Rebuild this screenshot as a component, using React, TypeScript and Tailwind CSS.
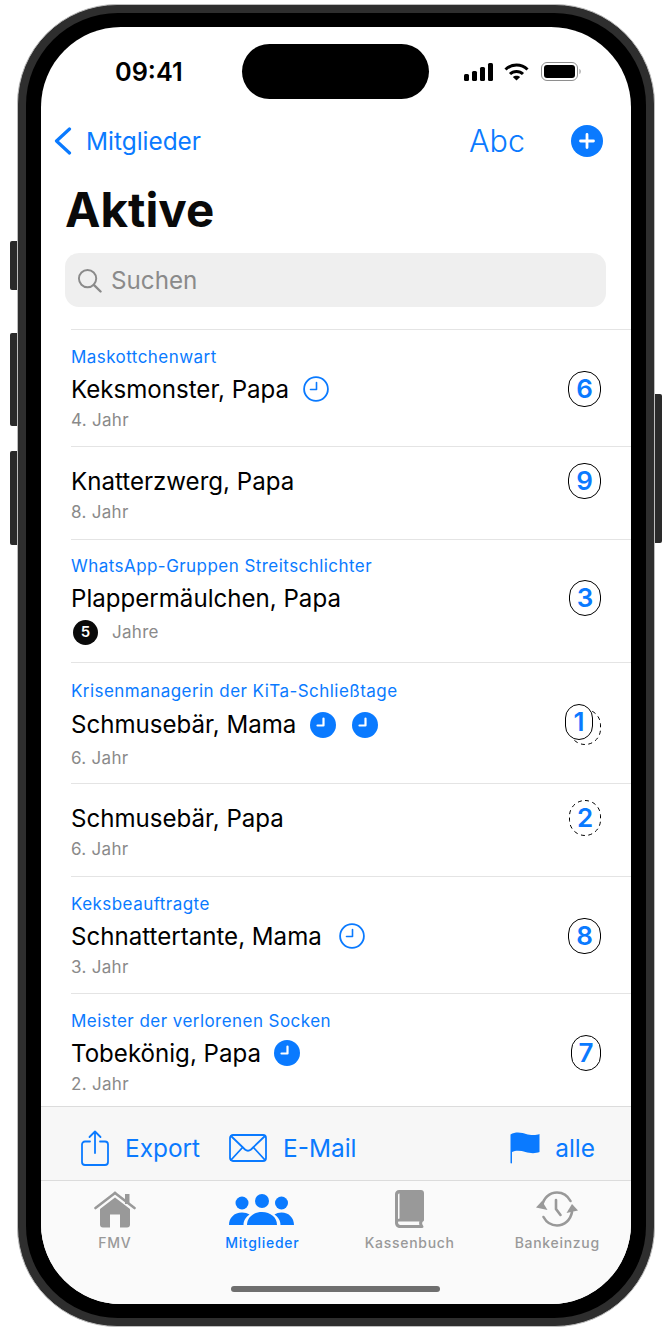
const BLUE = "#0a7aff";

function Clock({ filled }: { filled?: boolean }) {
  return (
    <svg width="26" height="26" viewBox="0 0 26 26" className="shrink-0">
      {filled ? (
        <>
          <circle cx="13" cy="13" r="13" fill={BLUE} />
          <path d="M13.500 6.500V13.500H7.500" fill="none" stroke="#fff" strokeWidth="2.200" strokeLinecap="round" strokeLinejoin="round" />
        </>
      ) : (
        <>
          <circle cx="13" cy="13" r="11.900" fill="none" stroke={BLUE} strokeWidth="1.800" />
          <path d="M13.500 6.500V13.500H7.500" fill="none" stroke={BLUE} strokeWidth="1.600" strokeLinecap="round" strokeLinejoin="round" />
        </>
      )}
    </svg>
  );
}

function DashedOutline({ w }: { w: number }) {
  return (
    <svg width={w} height="36" viewBox={`0 0 ${w} 36`} fill="none" className="absolute left-0 top-0">
      <rect x="0.500" y="0.500" width={w - 1} height="35" rx="15.500" stroke="#000" strokeWidth="1" strokeDasharray="4 3.500" />
    </svg>
  );
}

function Badge({ n, dashed, w }: { n: number; dashed?: boolean; w: string }) {
  return (
    <div
      className={
        "relative flex h-[36px] items-center justify-center rounded-[16px] text-[26px] font-semibold text-[#0a7aff] " +
        w +
        (dashed ? "" : " border border-black")
      }
    >
      {dashed && <DashedOutline w={32} />}
      {n}
    </div>
  );
}

type Member = {
  role?: string;
  name: string;
  sub: string;
  clocks?: ("line" | "fill")[];
  clockMl?: string;
  badge: number;
  badgeW: string;
  h: string;
  dashed?: boolean;
  overlap?: boolean;
  award?: boolean;
};

const members: Member[] = [
  { role: "Maskottchenwart", name: "Keksmonster, Papa", sub: "4. Jahr", clocks: ["line"], clockMl: "ml-[14px]", badge: 6, badgeW: "w-[33px]", h: "h-[117px]" },
  { name: "Knatterzwerg, Papa", sub: "8. Jahr", badge: 9, badgeW: "w-[33px]", h: "h-[93px]" },
  { role: "WhatsApp-Gruppen Streitschlichter", name: "Plappermäulchen, Papa", sub: "Jahre", badge: 3, badgeW: "w-[32px]", h: "h-[123px]", award: true },
  { role: "Krisenmanagerin der KiTa-Schließtage", name: "Schmusebär, Mama", sub: "6. Jahr", clocks: ["fill", "fill"], clockMl: "ml-[14px]", badge: 1, badgeW: "w-[28px]", h: "h-[121px]", overlap: true },
  { name: "Schmusebär, Papa", sub: "6. Jahr", badge: 2, badgeW: "w-[32px]", h: "h-[93px]", dashed: true },
  { role: "Keksbeauftragte", name: "Schnattertante, Mama", sub: "3. Jahr", clocks: ["line"], clockMl: "ml-[17px]", badge: 8, badgeW: "w-[33px]", h: "h-[117px]" },
  { role: "Meister der verlorenen Socken", name: "Tobekönig, Papa", sub: "2. Jahr", clocks: ["fill"], clockMl: "ml-[13px]", badge: 7, badgeW: "w-[30px]", h: "h-[117px]" },
];

function Row({ m }: { m: Member }) {
  return (
    <div className={"ml-[30px] flex shrink-0 flex-col justify-center border-t border-[#e4e4e4] pr-[30px] " + m.h + (m.overlap ? " pt-[2px]" : "")}>
      {m.role && <div className="mb-[2px] h-6 text-[17px] leading-6 tracking-[0.45px] text-[#0a7aff]">{m.role}</div>}
      <div className={"flex h-9 items-center justify-between " + (m.overlap ? "mb-[2px] mt-[2px]" : "")}>
        <div className="flex items-center text-[24.1px] leading-9 text-black">
          <span className={m.overlap ? "" : "pt-[2px]"}>{m.name}</span>
          {m.clocks && (
            <div className={"flex gap-[16px] " + m.clockMl}>
              {m.clocks.map((c, i) => (
                <Clock key={i} filled={c === "fill"} />
              ))}
            </div>
          )}
        </div>
        {m.overlap ? (
          <div className="relative -mt-[6px] flex justify-end">
            <div className="absolute right-0 top-[5px] h-[36px] w-[32px]">
              <DashedOutline w={32} />
            </div>
            <div className="relative mr-[8px] rounded-[16px] bg-white">
              <Badge n={m.badge} w={m.badgeW} />
            </div>
          </div>
        ) : (
          <Badge n={m.badge} w={m.badgeW} dashed={m.dashed} />
        )}
      </div>
      {m.award ? (
        <div className="mt-[1px] flex h-8 items-center text-[17px] tracking-[0.3px] text-[#8a8a8a]">
          <span className="ml-[2px] flex h-[25px] w-[25px] items-center justify-center rounded-full bg-[#0a0a0a] text-[15px] font-semibold text-white">
            5
          </span>
          <span className="ml-[14px]">Jahre</span>
        </div>
      ) : (
        <div className="mt-[1px] h-6 text-[17px] leading-6 tracking-[0.3px] text-[#8a8a8a]">{m.sub}</div>
      )}
    </div>
  );
}

function Tab({ label, active, children }: { label: string; active?: boolean; children: React.ReactNode }) {
  return (
    <div className="flex flex-1 flex-col items-center pt-[8px]">
      <div className="flex h-[40px] items-center justify-center">{children}</div>
      <div className={"mt-[4px] text-[14px] font-medium leading-5 tracking-[0.7px] " + (active ? "text-[#0a7aff]" : "text-[#999999]")}>
        {label}
      </div>
    </div>
  );
}

export default function App() {
  return (
    <div className="h-[1332px] w-[671px] overflow-hidden bg-white font-['Inter',sans-serif]">
      <div className="relative ml-[17px] mt-[4px] h-[1323px] w-[638px] rounded-[100px] border border-[#bdbdbd] bg-[#2e2e2e] p-[8px]">
        {/* side buttons */}
        <div className="absolute -left-[8px] top-[236px] h-[49px] w-[7px] rounded-l-[2px] bg-[#2a2a2a]" />
        <div className="absolute -left-[8px] top-[328px] h-[93px] w-[7px] rounded-l-[2px] bg-[#2a2a2a]" />
        <div className="absolute -left-[8px] top-[446px] h-[94px] w-[7px] rounded-l-[2px] bg-[#2a2a2a]" />
        <div className="absolute -right-[8px] top-[389px] h-[149px] w-[7px] rounded-r-[2px] bg-[#2a2a2a]" />

        <div className="h-full w-full rounded-[92px] bg-black px-[15px] py-[14px]">
          <div className="relative flex h-full w-full flex-col overflow-hidden rounded-[80px] bg-white">
            {/* dynamic island */}
            <div className="absolute left-[201px] top-[17px] h-[55px] w-[187px] rounded-full bg-black" />

            <div className="flex h-[88px] shrink-0 items-start justify-between pl-[74px] pr-[49px] pt-[27px]">
              <span className="text-[25.3px] font-semibold leading-9 text-black">09:41</span>
              <div className="flex items-center gap-[11px] pt-[8px]">
                <svg width="29" height="18" viewBox="0 0 29 18" fill="#000">
                  <rect x="0" y="11" width="5" height="7" rx="1.500" />
                  <rect x="8" y="8" width="5" height="10" rx="1.500" />
                  <rect x="16" y="4" width="5" height="14" rx="1.500" />
                  <rect x="24" y="0" width="5" height="18" rx="1.500" />
                </svg>
                <svg width="25" height="18" viewBox="0 0 25 18" fill="none" stroke="#000" strokeWidth="3">
                  <path d="M1.500 6.500C7.500 0.500 17.500 0.500 23.500 6.500" />
                  <path d="M6 11C9.500 7.500 15.500 7.500 19 11" />
                  <path d="M12.500 17.500L8.800 14C10.800 12.300 14.200 12.300 16.200 14Z" fill="#000" stroke="none" />
                </svg>
                <svg width="41" height="19" viewBox="0 0 41 19" className="ml-[1px]">
                  <rect x="0.500" y="0.500" width="36" height="18" rx="5.500" fill="none" stroke="#8e8e8e" />
                  <rect x="3" y="3" width="31" height="13" rx="3" fill="#000" />
                  <path d="M38.500 7C40 7.500 40 11.500 38.500 12Z" fill="#8e8e8e" />
                </svg>
              </div>
            </div>

            {/* nav bar */}
            <div className="flex h-[52px] shrink-0 items-center pl-[13px] pr-[28px]">
              <svg width="18" height="28" viewBox="0 0 18 28" fill="none" stroke="#0a7aff" strokeWidth="3.200" strokeLinecap="round" strokeLinejoin="round">
                <path d="M15.500 2L2.500 14L15.500 26" />
              </svg>
              <span className="ml-[14px] text-[24.4px] text-[#0a7aff]">Mitglieder</span>
              <span className="ml-auto text-[30.5px] font-light text-[#0a7aff]">Abc</span>
              <svg width="32" height="32" viewBox="0 0 32 32" className="ml-[46px]">
                <circle cx="16" cy="16" r="16" fill="#0a7aff" />
                <path d="M16 9.500V22.500M9.500 16H22.500" stroke="#fff" strokeWidth="2.800" strokeLinecap="round" />
              </svg>
            </div>

            {/* title */}
            <div className="flex h-[86px] shrink-0 items-center pl-[24px]">
              <h1 className="text-[47.5px] font-bold leading-none text-[#0a0a0a]">Aktive</h1>
            </div>

            {/* search */}
            <div className="ml-[24px] mr-[25px] flex h-[54px] shrink-0 items-center rounded-[14px] bg-[#efefef] pl-[12px]">
              <svg width="25" height="25" viewBox="0 0 26 26" fill="none" stroke="#8a8a8a" strokeWidth="2" strokeLinecap="round">
                <circle cx="11" cy="11" r="9" />
                <path d="M17.500 17.500L24.500 24.500" strokeWidth="2.400" />
              </svg>
              <span className="ml-[9px] pt-[3px] text-[24.2px] text-[#8a8a8a]">Suchen</span>
            </div>

            {/* list */}
            <div className="mt-[22px] flex min-h-0 flex-1 flex-col overflow-hidden">
              {members.map((m) => (
                <Row key={m.name} m={m} />
              ))}
            </div>

            {/* toolbar */}
            <div className="flex h-[75px] shrink-0 items-center border-y border-[#dcdcdc] bg-[#f7f7f7] pl-[40px] pr-[36px] pt-[8px] text-[24.4px] text-[#0a7aff]">
              <svg width="28" height="36" viewBox="0 0 28 36" fill="none" stroke="#0a7aff" strokeWidth="1.800" strokeLinecap="round" strokeLinejoin="round">
                <path d="M9 11.500H4a3 3 0 0 0-3 3V32a3 3 0 0 0 3 3h20a3 3 0 0 0 3-3V14.500a3 3 0 0 0-3-3h-5" />
                <path d="M14 23V1.500M8.500 7L14 1.500L19.500 7" />
              </svg>
              <span className="ml-[16px] pt-[2px]">Export</span>
              <svg width="38" height="28" viewBox="0 0 38 28" fill="none" stroke="#0a7aff" strokeWidth="1.800" strokeLinecap="round" strokeLinejoin="round" className="ml-[29px]">
                <rect x="1" y="1" width="36" height="26" rx="3" />
                <path d="M2 2L16 15.500C17.800 17 20.200 17 22 15.500L36 2" />
                <path d="M2 26L13.500 13.500M36 26L24.500 13.500" />
              </svg>
              <span className="ml-[16px] pt-[2px]">E-Mail</span>
              <svg width="30" height="32" viewBox="0 0 30 32" fill="#0a7aff" className="ml-auto">
                <path d="M0.500 2.500C6 -1 13 1 16 2C20 3.200 26 3.500 29.500 2V20C26 21.600 20 21.500 15.500 20C11 18.600 6 18 2 20V31C2 31.600 0.500 31.600 0.500 31Z" />
              </svg>
              <span className="ml-[15px] pt-[2px]">alle</span>
            </div>

            {/* tab bar */}
            <div className="relative flex h-[123px] shrink-0 bg-[#fafafa]">
              <Tab label="FMV">
                <svg width="42" height="38" viewBox="0 0 42 38" fill="#999999">
                  <path d="M21 3L1.500 18" fill="none" stroke="#999999" strokeWidth="2.600" strokeLinecap="round" />
                  <path d="M21 3L40.500 18" fill="none" stroke="#999999" strokeWidth="2.600" strokeLinecap="round" />
                  <rect x="31" y="4" width="4.500" height="10" />
                  <path fillRule="evenodd" d="M21 7.500L36 19V34.500a3 3 0 0 1-3 3H9a3 3 0 0 1-3-3V19ZM16 24.500V37.500H26V24.500Z" />
                </svg>
              </Tab>
              <Tab label="Mitglieder" active>
                <svg width="66" height="32" viewBox="0 0 66 32" fill="#0a7aff" className="mt-[2px]">
                  <circle cx="13" cy="9" r="6.500" />
                  <circle cx="33" cy="7" r="7" />
                  <circle cx="52.500" cy="9" r="6.500" />
                  <path d="M0 31C0 24 5 18.500 13 18.500C16 18.500 18.500 19.300 20.500 20.500C17 22.800 14.500 26.500 14.500 31Z" />
                  <path d="M65 31C65 24 60 18.500 52.500 18.500C49.500 18.500 47.500 19.300 45.500 20.500C49 22.800 51.500 26.500 51.500 31Z" />
                  <path d="M18 31C18 23.500 24.500 18 33 18C41.500 18 48 23.500 48 31Z" />
                </svg>
              </Tab>
              <Tab label="Kassenbuch">
                <svg width="30" height="38" viewBox="0 0 30 38" fill="#999999">
                  <path fillRule="evenodd" d="M4 0H26C27.700 0 29 1.300 29 3V30C29 31 28 31.500 27.500 32C27 33 27 34 28 35.500C29 36.800 28.500 38 27 38H5C2.500 38 0 36 0 33V4C0 1.800 1.800 0 4 0ZM3 32C3 34 4 35 5.500 35H24.500C24 34 24 32.500 24.500 31.500H5.500C4 31.500 3 31 3 32ZM4.500 3.500C3.500 3.500 3 4 3 5V29C3.500 28.700 4 28.500 4.500 28.500Z" />
                </svg>
              </Tab>
              <Tab label="Bankeinzug">
                <svg width="42" height="36" viewBox="0 0 42 36" fill="none" stroke="#999999" strokeWidth="2.600" strokeLinecap="round">
                  <path d="M6 15C7.500 7 13.500 1.500 21 1.500C26.500 1.500 31.500 4.500 34.500 10" />
                  <path d="M36 21C34.500 29 28.500 34.500 21 34.500C15.500 34.500 10.500 31.500 7.500 26" />
                  <path d="M20 9V18L24.500 24" />
                  <path d="M0 16.500L6 10L11.500 19Z" fill="#999999" stroke="none" />
                  <path d="M42 19.500L36 13L30.500 22Z" fill="#999999" stroke="none" />
                </svg>
              </Tab>
              <div className="absolute bottom-[12px] left-[190px] h-[6px] w-[209px] rounded-full bg-[#6e6e6e]" />
            </div>
          </div>
        </div>
      </div>
    </div>
  );
}
